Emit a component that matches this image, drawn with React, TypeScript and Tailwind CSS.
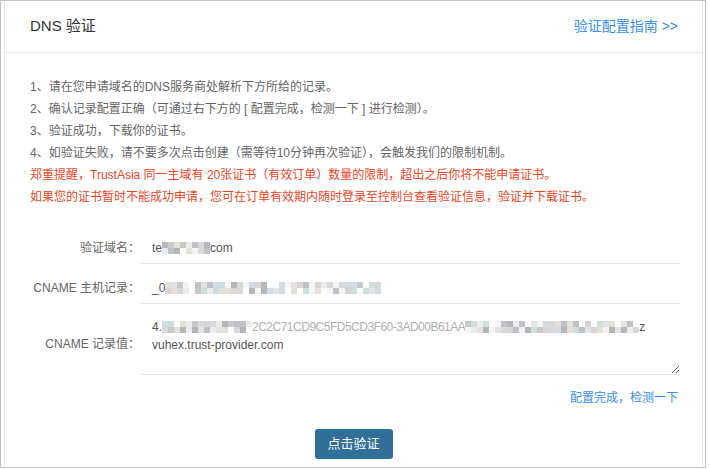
import React from 'react'

const palette = [
  '#d9d9d9', '#c9c9c9', '#e4e4e4', '#bfc3c9', '#d3dbe5', '#e6e1d6',
  '#b5b5ba', '#ececec', '#dcd3d6', '#cde0dd', '#f4f4f4', '#ffffff', '#ffffff',
]

// pixelated blur blocks standing in for redacted text
const Blur: React.FC<{ cols: number; seed: number }> = ({ cols, seed }) => {
  let s = seed
  const next = () => {
    s = (s * 9301 + 49297) % 233280
    return palette[Math.floor((s / 233280) * palette.length)]
  }
  const cells = Array.from({ length: cols * 2 }, () => next())
  return (
    <span className="inline-grid grid-rows-2 grid-flow-col align-middle">
      {cells.map((c, i) => (
        <span key={i} className="block w-[6px] h-[6px]" style={{ background: c }} />
      ))}
    </span>
  )
}

export default function App() {
  return (
    <div className="w-[710px] h-[469px] bg-white font-['Liberation_Sans','Noto_Sans_CJK_SC',sans-serif]">
      <div className="w-[706px] h-[468px] border border-[#c4c4c4] pl-[3px] pr-[2px]">
        <div className="h-full border-x border-[#e8e8e8]">
          <div className="h-[52px] border-b border-[#e8e8e8] flex items-center justify-between pl-[25px] pr-[24px]">
            <span className="text-[15px] text-[#333]">DNS 验证</span>
            <a className="text-[14px] text-[#3a8ee6]">验证配置指南 &gt;&gt;</a>
          </div>

          <div className="pl-[25px] pt-[23px] text-[12px] leading-[22px] text-[#666]">
            <p>1、请在您申请域名的DNS服务商处解析下方所给的记录。</p>
            <p>2、确认记录配置正确（可通过右下方的 [ 配置完成，检测一下 ] 进行检测）。</p>
            <p>3、验证成功，下载你的证书。</p>
            <p>4、如验证失败，请不要多次点击创建（需等待10分钟再次验证），会触发我们的限制机制。</p>
            <p className="text-[#e9471f]">郑重提醒，TrustAsia 同一主域有 20张证书（有效订单）数量的限制，超出之后你将不能申请证书。</p>
            <p className="text-[#e9471f]">如果您的证书暂时不能成功申请，您可在订单有效期内随时登录至控制台查看验证信息，验证并下载证书。</p>
          </div>

          <div className="mt-[24px] flex flex-col gap-[8px] text-[12px]">
            <div className="flex items-center">
              <label className="w-[135px] text-right text-[#666]">验证域名：</label>
              <div className="w-[540px] h-[32px] border-b border-[#e6e6e6] pl-[12px] flex items-center text-[#555]">
                te<Blur cols={8} seed={7} />com
              </div>
            </div>
            <div className="flex items-center">
              <label className="w-[135px] text-right text-[#666]">CNAME 主机记录：</label>
              <div className="w-[540px] h-[32px] border-b border-[#e6e6e6] pl-[12px] flex items-center text-[#555]">
                _0<Blur cols={36} seed={31} />
              </div>
            </div>
            <div className="flex items-center">
              <label className="w-[135px] text-right text-[#666]">CNAME 记录值：</label>
              <div className="w-[540px] h-[63px] border-b border-[#e6e6e6] pl-[12px] pt-[6px] pr-[14px] leading-[18px] text-[#555] resize-y overflow-auto">
                <div className="flex items-center whitespace-nowrap">
                  4.<Blur cols={15} seed={53} />
                  <span className="text-[#b0b0b0] tracking-[-0.5px]">2C2C71CD9C5FD5CD3F60-3AD00B61AA</span>
                  <Blur cols={29} seed={97} />z
                </div>
                <div>vuhex.trust-provider.com</div>
              </div>
            </div>
          </div>

          <div className="flex mt-[14px]">
            <div className="w-[135px]" />
            <div className="w-[540px] text-right pr-[2px] text-[12px] leading-[18px] text-[#3a8ee6]">配置完成，检测一下</div>
          </div>

          <div className="flex justify-center mt-[22px]">
            <button className="w-[78px] h-[30px] rounded-[3px] bg-[#2f6f98] text-white text-[13px]">点击验证</button>
          </div>
        </div>
      </div>
    </div>
  )
}
